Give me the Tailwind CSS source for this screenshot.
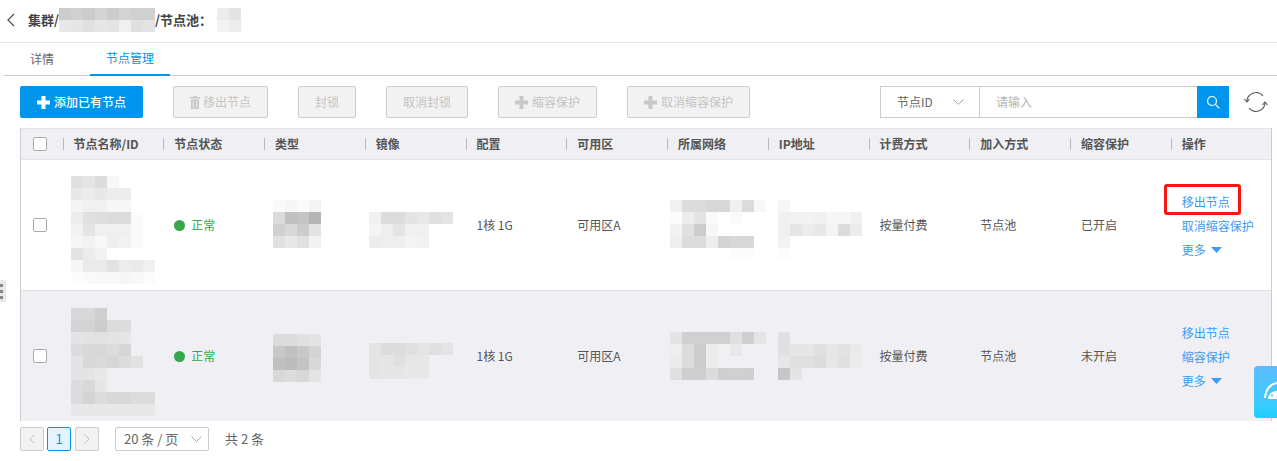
<!DOCTYPE html>
<html lang="zh-CN">

<head>
    <meta charset="UTF-8">
    <title>节点池</title>
    <script src="https://cdn.jsdelivr.net/npm/@tailwindcss/browser@4"></script>
</head>

<body class="relative h-[461px] w-[1277px] overflow-hidden bg-white font-['Noto_Sans_CJK_SC','Noto_Sans',sans-serif] text-xs text-[#555]">

    <!-- Breadcrumb -->
    <div class="flex h-[43px] items-center border-b border-[#e3e3e3] pb-[2px]">
        <svg class="ml-[6px] h-[14px] w-[9px]" viewBox="0 0 9 14" fill="none" stroke="#555" stroke-width="1.3"><path d="M8 1 2 7l6 6" /></svg>
        <span class="ml-[13px] text-[13px] font-bold text-[#444]">集群/</span>
        <div class="h-[24px] w-[96px]" data-mosaic="cc,d0,cc,d4,cc,d4,d0,d0|e8,e6,e0,e6,e4,f0,e0,e4"></div>
        <span class="text-[13px] font-bold text-[#444]">/节点池：</span>
        <div class="ml-[5px] h-[24px] w-[24px]" data-mosaic="ec,e4|f2,ec"></div>
    </div>

    <!-- Tabs -->
    <div class="ml-[4px] flex h-[33px] border-b border-[#ccc]">
        <div class="flex w-[76px] items-center justify-center pb-[1px] text-[#666]">详情</div>
        <div class="ml-[10px] flex h-[33px] w-[80px] items-center justify-center border-b-2 border-[#0095ec] pb-[1px] text-[#0095ec]">节点管理</div>
    </div>

    <!-- Toolbar -->
    <div class="ml-[20px] mt-[10px] flex h-[32px] items-stretch">
        <button class="flex w-[123px] items-center justify-center gap-[4px] rounded-[2px] bg-[#0095ec] font-medium text-white">
            <svg class="h-[13px] w-[13px]" viewBox="0 0 13 13" fill="#fff"><path d="M4.500 0h4v4.500H13v4H8.500V13h-4V8.500H0v-4h4.500z" /></svg>
            添加已有节点
        </button>
        <button class="ml-[30px] flex w-[95px] items-center justify-center gap-[3px] rounded-[2px] border border-[#ccc] bg-[#f2f2f2] text-[#c4c4c4]">
            <svg class="h-[13px] w-[10px]" viewBox="0 0 10 13" fill="#c8c8c8"><path d="M3.500 0h3v1H10v1.500H0V1h3.500zM1 3.500h8V13H1zM2.800 5v6.500h.8V5zm3.500 0v6.500h.9V5z" /></svg>
            移出节点
        </button>
        <button class="ml-[30px] w-[58px] rounded-[2px] border border-[#ccc] bg-[#f2f2f2] text-[#c4c4c4]">封锁</button>
        <button class="ml-[30px] w-[82px] rounded-[2px] border border-[#ccc] bg-[#f2f2f2] text-[#c4c4c4]">取消封锁</button>
        <button class="ml-[30px] flex w-[99px] items-center justify-center gap-[4px] rounded-[2px] border border-[#ccc] bg-[#f2f2f2] text-[#c4c4c4]">
            <svg class="h-[13px] w-[13px]" viewBox="0 0 13 13" fill="#c8c8c8"><path d="M4.500 0h4v4.500H13v4H8.500V13h-4V8.500H0v-4h4.500z" /></svg>
            缩容保护
        </button>
        <button class="ml-[30px] flex w-[123px] items-center justify-center gap-[4px] rounded-[2px] border border-[#ccc] bg-[#f2f2f2] text-[#c4c4c4]">
            <svg class="h-[13px] w-[13px]" viewBox="0 0 13 13" fill="#c8c8c8"><path d="M4.500 0h4v4.500H13v4H8.500V13h-4V8.500H0v-4h4.500z" /></svg>
            取消缩容保护
        </button>

        <!-- Search -->
        <div class="ml-[130px] flex w-[99px] items-center border border-r-0 border-[#ccc] pl-[16px] text-[#666]">
            节点ID
            <svg class="ml-[20px] h-[7px] w-[11px]" viewBox="0 0 11 7" fill="none" stroke="#aaa"><path d="m.5.500 5 5 5-5" /></svg>
        </div>
        <div class="flex w-[218px] items-center border border-r-0 border-[#ccc] pl-[16px] text-[#b5b5b5]">请输入</div>
        <button class="flex w-[32px] items-center justify-center bg-[#0095ec]">
            <svg class="h-[14px] w-[14px]" viewBox="0 0 14 14" fill="none" stroke="#fff" stroke-width="1.200"><circle cx="6" cy="6" r="4.500" /><path d="m9.300 9.300 4 4" /></svg>
        </button>
        <svg class="ml-[15px] mt-[5px] h-[22px] w-[24px]" viewBox="0 0 24 22" fill="none" stroke="#555" stroke-width="1.100">
            <path d="M3 11a9 9 0 0 1 16-6M21 11a9 9 0 0 1-16 6" />
            <path d="m.5 8 2.500 3 2.500-3M18.500 14l2.500-3 2.500 3" />
        </svg>
    </div>

    <!-- Table -->
    <div class="ml-[20px] mt-[10px] w-[1252px] border-x border-[#ccc]">
        <div class="grid h-[32px] grid-cols-[41.500px_repeat(12,100.750px)] items-center border-y border-[#e2e2e8] bg-[#efeff4] font-bold text-[#555]">
            <div class="pl-[12px]"><span class="block h-[14px] w-[14px] rounded-[2px] border border-[#aaa] bg-white"></span></div>
            <div class="h-[12px] border-l border-[#bbb] pl-[10px] leading-[12px]">节点名称/ID</div>
            <div class="h-[12px] border-l border-[#bbb] pl-[10px] leading-[12px]">节点状态</div>
            <div class="h-[12px] border-l border-[#bbb] pl-[10px] leading-[12px]">类型</div>
            <div class="h-[12px] border-l border-[#bbb] pl-[10px] leading-[12px]">镜像</div>
            <div class="h-[12px] border-l border-[#bbb] pl-[10px] leading-[12px]">配置</div>
            <div class="h-[12px] border-l border-[#bbb] pl-[10px] leading-[12px]">可用区</div>
            <div class="h-[12px] border-l border-[#bbb] pl-[10px] leading-[12px]">所属网络</div>
            <div class="h-[12px] border-l border-[#bbb] pl-[10px] leading-[12px]">IP地址</div>
            <div class="h-[12px] border-l border-[#bbb] pl-[10px] leading-[12px]">计费方式</div>
            <div class="h-[12px] border-l border-[#bbb] pl-[10px] leading-[12px]">加入方式</div>
            <div class="h-[12px] border-l border-[#bbb] pl-[10px] leading-[12px]">缩容保护</div>
            <div class="h-[12px] border-l border-[#bbb] pl-[10px] leading-[12px]">操作</div>
        </div>

        <!-- Row 1 -->
        <div class="relative grid h-[131px] grid-cols-[41.500px_repeat(12,100.750px)] items-center border-b border-[#e0e0e0]">
            <div class="pl-[12px]"><span class="block h-[14px] w-[14px] rounded-[2px] border border-[#aaa] bg-white"></span></div>
            <div class="ml-[8px] self-start pt-[16px]" data-mosaic="e0,e4,dc,f8|e8,ec,e8,ec,ec|f4,f0,f0,f6,f6|ec,e0,de,dc,dc,fa|f2,e4,f0,f0,f0,fa|f6,f2,f8,ee,f2,fa|e4,ec,f2|f6,ea,ea,e2,ec,ea,f0|fc,fa,f8,f8,f6,f8,fb"></div>
            <div class="flex items-center gap-[6px] pl-[11px] text-[#35a84a]"><span class="h-[11px] w-[11px] rounded-full bg-[#35a84a]"></span>正常</div>
            <div class="ml-[9px] self-start pt-[40px]" data-mosaic="fa,f6,fb,f4|dc,c0,c4,b4|d0,d8,cc,e4|e0,e8,e0,f2"></div>
            <div class="ml-[4px] self-start pt-[52px]" data-mosaic="f0,dc,dc,e4,e8,e0,e4|f4,ee,e4,f0,f0|ec,ee,ee,f4,f2"></div>
            <div class="pl-[11px]">1核 1G</div>
            <div class="pl-[11px]">可用区A</div>
            <div class="ml-[3px] self-start pt-[40px]" data-mosaic="f0,dc,dc,d8,d8,f0,dc,f8|fc,ec,e4,fa,00,fa|f2,e0,cc,f6|ee,dc,dc,ee,d4,d8,d8|00,00,00,00,00,fc,fc"></div>
            <div class="ml-[10px] self-start pt-[40px]" data-mosaic="f6|f0,f2,f2,f0,f6,f6,f0|f0,e6,ec,e8,f4,dc,ec|f2|fc"></div>
            <div class="pl-[11px]">按量付费</div>
            <div class="pl-[11px]">节点池</div>
            <div class="pl-[11px]">已开启</div>
            <div class="flex flex-col items-start gap-[6px] pl-[11px] pt-[2px] text-[#3a9bf0]">
                <span class="leading-[18px]">移出节点</span>
                <span class="leading-[18px]">取消缩容保护</span>
                <span class="flex items-center gap-[5px] leading-[18px]">更多<svg class="h-[6px] w-[11px]" viewBox="0 0 11 6" fill="#3a9bf0"><path d="M0 0h11L5.500 6z" /></svg></span>
            </div>
        </div>

        <!-- Row 2 -->
        <div class="grid h-[130px] grid-cols-[41.500px_repeat(12,100.750px)] items-center bg-[#f0f0f4]">
            <div class="pl-[12px]"><span class="block h-[14px] w-[14px] rounded-[2px] border border-[#aaa] bg-white"></span></div>
            <div class="ml-[8px] self-start pt-[17px]" data-mosaic="d8,d8,cf|d4,d4,cc,dc,dc|e4,e2,e2,e4,e6|dc,d8,d8,dc,d6|e4,d8,da,d6,dc,e2|e4,e4,e8|dc,d8,e6|dc,d4,dc,d8,d8,dc,dc|e8,e8,e8,e8,e8,e8,e8"></div>
            <div class="flex items-center gap-[6px] pl-[11px] text-[#35a84a]"><span class="h-[11px] w-[11px] rounded-full bg-[#35a84a]"></span>正常</div>
            <div class="ml-[9px] self-start pt-[43px]" data-mosaic="dc,dc,e0,e4|c8,c0,c8,d4|c0,bc,c4,d8|d8,dc,d8,e4"></div>
            <div class="ml-[4px] self-start pt-[52px]" data-mosaic="e4,dc,dc,e0,e4,e0,e4|e4,e6,e0,e6,e8|e4,e6,e6,e8,e8"></div>
            <div class="pl-[11px]">1核 1G</div>
            <div class="pl-[11px]">可用区A</div>
            <div class="ml-[3px] self-start pt-[41px]" data-mosaic="e4,d0,d0,d0,d0,e0,cf,e4|ee,dc,cc,ec,f0,e8|ea,dc,cc,ec|e0,cf,cf,dc,cf,d0,cf"></div>
            <div class="ml-[10px] self-start pt-[41px]" data-mosaic="e0|e0,e6,e6,e0,e6,e2,ea|e6,e0,e0,dc,e6,e0,ec|c6,e4"></div>
            <div class="pl-[11px]">按量付费</div>
            <div class="pl-[11px]">节点池</div>
            <div class="pl-[11px]">未开启</div>
            <div class="flex flex-col items-start gap-[6px] pl-[11px] pt-[2px] text-[#3a9bf0]">
                <span class="leading-[18px]">移出节点</span>
                <span class="leading-[18px]">缩容保护</span>
                <span class="flex items-center gap-[5px] leading-[18px]">更多<svg class="h-[6px] w-[11px]" viewBox="0 0 11 6" fill="#3a9bf0"><path d="M0 0h11L5.500 6z" /></svg></span>
            </div>
        </div>
    </div>

    <!-- Pagination -->
    <div class="ml-[20px] mt-[6px] flex h-[24px] items-stretch text-[13px] text-[#666]">
        <button class="flex w-[24px] items-center justify-center rounded-[2px] border border-[#ccc] bg-[#f2f2f2]">
            <svg class="h-[10px] w-[6px]" viewBox="0 0 6 10" fill="none" stroke="#c4c4c4"><path d="M5.500.500 1 5l4.500 4.500" /></svg>
        </button>
        <button class="ml-[3px] w-[24px] rounded-[2px] border border-[#0095ec] bg-[#e3f4fe] text-[#0095ec]">1</button>
        <button class="ml-[4px] flex w-[24px] items-center justify-center rounded-[2px] border border-[#ccc] bg-[#f2f2f2]">
            <svg class="h-[10px] w-[6px]" viewBox="0 0 6 10" fill="none" stroke="#c4c4c4"><path d="M.5.500 5 5 .5 9.500" /></svg>
        </button>
        <div class="ml-[16px] flex w-[94px] items-center justify-between rounded-[2px] border border-[#ccc] pl-[8px] pr-[6px]">
            20 条 / 页
            <svg class="h-[7px] w-[11px]" viewBox="0 0 11 7" fill="none" stroke="#aaa"><path d="m.5.500 5 5 5-5" /></svg>
        </div>
        <div class="ml-[16px] flex items-center">共 2 条</div>
    </div>

    <!-- Annotation box over the first row action -->
    <div class="absolute left-[1164px] top-[184px] h-[31px] w-[77px] rounded-[3px] border-[3px] border-[#f5180f]"></div>

    <!-- Side handle -->
    <div class="absolute left-0 top-[280px] flex h-[22px] w-[6px] flex-col justify-center gap-[3px] rounded-r-[2px] bg-[#e8e8e8]">
        <span class="h-[3px] w-[3px] bg-[#888]"></span>
        <span class="h-[3px] w-[3px] bg-[#888]"></span>
        <span class="h-[3px] w-[3px] bg-[#888]"></span>
    </div>

    <!-- Floating service widget -->
    <div class="absolute left-[1254px] top-[366px] h-[52px] w-[23px] overflow-hidden rounded-l-[4px] bg-gradient-to-b from-[#5cbcff] to-[#1dd0ff]">
        <svg class="ml-[10px] mt-[15px] h-[18px] w-[13px]" viewBox="0 0 13 18" fill="none">
            <path d="M1 17C1.500 9 6 3 13 2" stroke="#fff" stroke-width="2" />
            <path d="M4 18c0-4 3-8 9-8v8z" fill="#fff" />
            <circle cx="8" cy="14.500" r="1" fill="#3ab8f5" />
        </svg>
    </div>

    <script>
        // Paint the blurred-out values from their grey levels
        document.querySelectorAll("[data-mosaic]").forEach(box => {
            box.dataset.mosaic.split("|").forEach(line => {
                const row = document.createElement("div");
                row.className = "flex";
                line.split(",").forEach(level => {
                    const cell = document.createElement("div");
                    cell.className = "h-3 w-3";
                    if (level !== "00") cell.style.background = "#" + level + level + level;
                    row.appendChild(cell);
                });
                box.appendChild(row);
            });
        });
    </script>
</body>

</html>
